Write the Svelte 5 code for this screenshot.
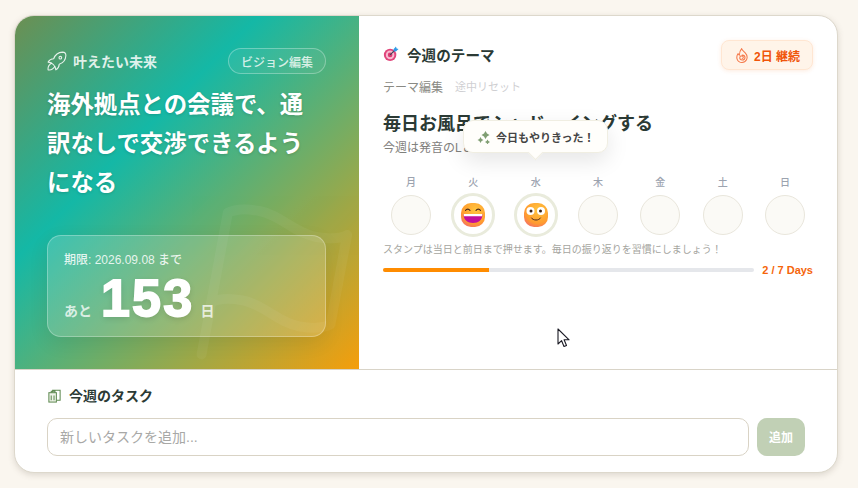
<script>
  const days = [
    { label: '月', stamp: null },
    { label: '火', stamp: 'grin' },
    { label: '水', stamp: 'smile' },
    { label: '木', stamp: null },
    { label: '金', stamp: null },
    { label: '土', stamp: null },
    { label: '日', stamp: null }
  ];
  const done = days.filter((d) => d.stamp).length;
  const progress = (done / days.length) * 100;
</script>

<div class="page">
  <main class="card">
    <div class="top">
      <section class="vision">
        <svg class="ghost" viewBox="0 0 24 24" fill="none" stroke="#fff" stroke-width="1.3" stroke-linecap="round" stroke-linejoin="round">
          <path d="M4 15s1-1 4-1 5 2 8 2 4-1 4-1V3s-1 1-4 1-5-2-8-2-4 1-4 1z" />
          <path d="M4 22v-7" />
        </svg>
        <div class="vision-head">
          <h2 class="vision-title">
            <svg class="rocket" viewBox="3 3 18 18" fill="none" stroke="currentColor" stroke-width="1" stroke-linecap="round" stroke-linejoin="round">
              <path d="M4 13a8 8 0 0 1 7 7a6 6 0 0 0 3 -5a9 9 0 0 0 6 -8a3 3 0 0 0 -3 -3a9 9 0 0 0 -8 6a6 6 0 0 0 -5 3" />
              <path d="M7 14a6 6 0 0 0 -3 6a6 6 0 0 0 6 -3" />
              <circle cx="15" cy="9" r="1.200" />
            </svg>
            叶えたい未来
          </h2>
          <button class="pill">ビジョン編集</button>
        </div>
        <p class="goal">海外拠点との会議で、通訳なしで交渉できるようになる</p>
        <div class="deadline">
          <div class="deadline-date">期限: 2026.09.08 まで</div>
          <div class="count">
            <span class="count-unit">あと</span>
            <span class="count-num">153</span>
            <span class="count-unit">日</span>
          </div>
        </div>
      </section>

      <section class="theme">
        <div class="theme-head">
          <h2 class="theme-title">
            <svg class="dart" viewBox="0 0 18 18">
              <circle cx="8" cy="10" r="7" fill="#e0457b" />
              <circle cx="8" cy="10" r="4.800" fill="#f8b8cf" />
              <circle cx="8" cy="10" r="2.600" fill="#d93a72" />
              <path d="M8 10 14 4" stroke="#3a4652" stroke-width="1.200" />
              <path d="M11.800 3.600 14.600.6l.7 2.100 2.200.6-3 3-2.500-.4z" fill="#2f9be6" />
            </svg>
            今週のテーマ
          </h2>
          <div class="streak">
            <svg class="flame" viewBox="4 2 16 20" fill="none" stroke="currentColor" stroke-width="1.400" stroke-linecap="round" stroke-linejoin="round">
              <path d="M11.500 2.800c.8 2.700 3 3.800 4.800 5.800 2.400 2.600 3.200 6 1.700 9-1.400 2.700-3.600 3.700-6 3.700-3 0-5.400-1.500-6.400-4.200-1-2.700-.3-5.600 1.200-7.600.4 1 .9 1.700 1.700 2.200.2-3.500 1-6.700 3-8.900z" />
              <path d="M12.200 11.200c2.200 0 3.800 1.500 3.800 3.400s-1.700 3.400-3.700 3.400-3.300-1.300-3.300-2.900 1.200-2.600 2.600-2.600 2.200.9 2.200 1.900-.7 1.500-1.500 1.500" />
            </svg>
            2日 継続
          </div>
        </div>
        <div class="theme-links">
          <button class="link">テーマ編集</button>
          <button class="link muted">途中リセット</button>
        </div>
        <h3 class="theme-name">毎日お風呂でシャドーイングする</h3>
        <p class="theme-sub">今週は発音のLとRを意識する</p>

        <div class="toast">
          <svg class="sparkle" viewBox="0 0 14 14" fill="#7f9e72">
            <path d="M8.500 1 10 3.500 12.500 5 10 6.500 8.500 9 7 6.500 4.500 5 7 3.500z" />
            <path d="M3.500 7 4.600 8.900 6.500 10 4.600 11.100 3.500 13 2.400 11.100.5 10 2.400 8.900z" />
            <path d="M10.500 9.500l.9 1.600 1.600.9-1.600.9-.9 1.600-.9-1.600-1.600-.9 1.600-.9z" />
          </svg>
          今日もやりきった！
        </div>

        <div class="week">
          {#each days as day}
            <div class="day">
              <span class="day-label">{day.label}</span>
              <div class="stamp" class:on={day.stamp}>
                {#if day.stamp}
                  <svg class="emoji" viewBox="0 0 26 26">
                    <defs>
                      <radialGradient id="face-{day.stamp}" cx="0.6" cy="0.3" r="0.85">
                        <stop offset="0" stop-color="#ffc53f" />
                        <stop offset="0.65" stop-color="#ff9c2f" />
                        <stop offset="1" stop-color="#f0607a" />
                      </radialGradient>
                    </defs>
                    <rect x="1" y="1" width="24" height="24" rx="10" fill="url(#face-{day.stamp})" />
                    {#if day.stamp === 'grin'}
                      <path d="M5.500 8.500c1-1.800 3.500-1.800 4.500 0M16 8.500c1-1.800 3.500-1.800 4.500 0" fill="none" stroke="#4a2a1c" stroke-width="1.100" stroke-linecap="round" />
                      <path d="M3.500 12h19c0 6-4 9-9.500 9S3.500 18 3.500 12z" fill="#c2109c" />
                      <path d="M3.700 12h18.600c0 .8-.1 1.500-.3 2.200H4c-.2-.7-.3-1.400-.3-2.200z" fill="#fff" />
                    {:else}
                      <circle cx="7.500" cy="9" r="4" fill="#fff" />
                      <circle cx="18" cy="9" r="4" fill="#fff" />
                      <circle cx="8" cy="9" r="1.500" fill="#3a2418" />
                      <circle cx="17.500" cy="9" r="1.500" fill="#3a2418" />
                      <path d="M8.500 16c1.500 2.800 7.500 2.800 9 0" fill="none" stroke="#4a2a1c" stroke-width="1" stroke-linecap="round" />
                    {/if}
                  </svg>
                {/if}
              </div>
            </div>
          {/each}
        </div>

        <p class="note">スタンプは当日と前日まで押せます。毎日の振り返りを習慣にしましょう！</p>
        <div class="progress">
          <div class="track"><div class="fill" style="width: {progress}%"></div></div>
          <span class="progress-label">{done} / {days.length} Days</span>
        </div>
      </section>
    </div>

    <section class="tasks">
      <h2 class="tasks-title">
        <svg class="clip" viewBox="0 0 16 16" fill="none" stroke="#5f8a52" stroke-width="1.100">
          <rect x="2" y="5" width="8" height="10" fill="#eef3e8" />
          <path d="M6 4.500V2.500h8v10.500h-3.500M4.500 5V3.500h4V5M4.500 8v5M7.500 8v5" />
        </svg>
        今週のタスク
      </h2>
      <div class="task-form">
        <input class="task-input" type="text" placeholder="新しいタスクを追加..." />
        <button class="add">追加</button>
      </div>
    </section>
  </main>

  <svg class="cursor" viewBox="0 0 14 20" width="14" height="20">
    <path d="M1 1v15l3.600-3.300 2.400 5.800 2.500-1-2.400-5.700h5z" fill="#fff" stroke="#1a1a24" stroke-width="1.100" stroke-linejoin="round" />
  </svg>
</div>

<style>
  :global(body) {
    margin: 0;
    background: #faf6ef;
  }
  .page {
    position: relative;
    box-sizing: border-box;
    width: 858px;
    height: 488px;
    padding: 15px 20px 15px 14px;
    font-family: "Liberation Sans", "Noto Sans CJK JP", sans-serif;
    color: #2b3a35;
  }
  .card {
    box-sizing: border-box;
    width: 824px;
    height: 458px;
    display: flex;
    flex-direction: column;
    background: #fff;
    border: 1px solid #ddd8cc;
    border-radius: 20px;
    box-shadow: 0 2px 6px rgba(90, 80, 60, 0.18);
    overflow: hidden;
  }
  h2, h3, p { margin: 0; }
  button { font-family: inherit; cursor: pointer; }
  .top {
    display: grid;
    grid-template-columns: 344px 1fr;
    height: 353px;
    border-bottom: 1px solid #d9d4c8;
  }
  .vision {
    position: relative;
    overflow: hidden;
    box-sizing: border-box;
    padding: 32px 33px 32px 32px;
    color: #fff;
    background: linear-gradient(135deg, #6c8f52 0%, #14b8a6 35%, #f59e0b 100%);
  }
  .ghost {
    position: absolute;
    left: 169px;
    top: 184px;
    width: 182px;
    height: 182px;
    opacity: 0.045;
    transform: rotate(10.5deg);
  }
  .vision-head {
    position: relative;
    display: flex;
    align-items: center;
    justify-content: space-between;
    height: 26px;
  }
  .vision-title {
    display: flex;
    align-items: center;
    gap: 6px;
    padding-bottom: 1px;
    font-size: 14px;
    font-weight: 700;
    color: rgba(255, 255, 255, 0.85);
  }
  .rocket { width: 20px; height: 20px; }
  .pill {
    height: 26px;
    width: 98px;
    padding: 0;
    font-size: 12px;
    font-weight: 500;
    color: rgba(255, 255, 255, 0.8);
    background: rgba(255, 255, 255, 0.06);
    border: 1px solid rgba(255, 255, 255, 0.3);
    border-radius: 13px;
  }
  .goal {
    position: relative;
    margin-top: 12px;
    font-size: 23.4px;
    font-weight: 700;
    line-height: 39px;
    text-shadow: 0 1px 3px rgba(0, 0, 0, 0.15);
  }
  .deadline {
    position: relative;
    box-sizing: border-box;
    margin-top: 32px;
    width: 279px;
    height: 102px;
    padding: 15px 16px;
    background: rgba(255, 255, 255, 0.16);
    border: 1px solid rgba(255, 255, 255, 0.28);
    border-radius: 14px;
    box-shadow: 0 6px 20px rgba(0, 0, 0, 0.08);
  }
  .deadline-date {
    font-size: 12px;
    line-height: 18px;
    font-weight: 500;
    color: rgba(255, 255, 255, 0.85);
  }
  .count {
    display: flex;
    align-items: baseline;
    gap: 9px;
    margin-top: 5px;
    line-height: 48px;
  }
  .count-unit {
    font-size: 14px;
    font-weight: 700;
    color: rgba(255, 255, 255, 0.75);
  }
  .count-num {
    margin-right: -3px;
    font-size: 52px;
    font-weight: 700;
    letter-spacing: 2.2px;
    -webkit-text-stroke: 1.8px #fff;
    text-shadow: 0 2px 6px rgba(0, 0, 0, 0.15);
  }
  .theme {
    position: relative;
    box-sizing: border-box;
    padding: 24px;
  }
  .theme-head {
    display: flex;
    align-items: center;
    justify-content: space-between;
    height: 30px;
  }
  .theme-title {
    display: flex;
    align-items: center;
    gap: 8px;
    padding-bottom: 2px;
    font-size: 14.6px;
    font-weight: 700;
    color: #2b3a35;
  }
  .dart { width: 16px; height: 16px; }
  .streak {
    box-sizing: border-box;
    display: flex;
    align-items: center;
    gap: 6px;
    width: 92px;
    height: 30px;
    padding-left: 14px;
    font-size: 12px;
    font-weight: 700;
    color: #f0550a;
    background: #fff4e9;
    border: 1px solid #ffe6d2;
    border-radius: 8px;
    box-shadow: 0 1px 4px rgba(240, 120, 40, 0.15);
  }
  .flame { width: 12px; height: 15px; color: #f5794a; }
  .theme-links {
    display: flex;
    gap: 12px;
    align-items: center;
    margin-top: 7px;
    height: 18px;
  }
  .link {
    padding: 0;
    border: 0;
    background: none;
    font-size: 12px;
    color: #8a8a84;
  }
  .link.muted { font-size: 11px; color: #cfcfd2; }
  .theme-name {
    margin-top: 16px;
    font-size: 18px;
    font-weight: 700;
    line-height: 26px;
    color: #2b3a35;
  }
  .theme-sub {
    margin-top: 2px;
    font-size: 12px;
    line-height: 18px;
    color: #7f807c;
  }
  .toast {
    position: absolute;
    left: 104px;
    top: 104px;
    box-sizing: border-box;
    width: 145px;
    height: 33px;
    display: flex;
    align-items: center;
    gap: 5px;
    padding-left: 13px;
    font-size: 11px;
    font-weight: 700;
    color: #444;
    background: #fffefb;
    border: 1px solid #f0eee2;
    border-radius: 10px;
    box-shadow: 0 8px 22px rgba(0, 0, 0, 0.1);
  }
  .toast::after {
    content: "";
    position: absolute;
    left: 66px;
    bottom: -6px;
    width: 10px;
    height: 10px;
    background: #fffefb;
    transform: rotate(45deg);
    border-right: 1px solid #f0eee2;
    border-bottom: 1px solid #f0eee2;
  }
  .sparkle { width: 14px; height: 14px; }
  .week {
    display: flex;
    justify-content: space-between;
    margin-top: 18px;
  }
  .day {
    width: 56px;
    display: flex;
    flex-direction: column;
    align-items: center;
  }
  .day-label {
    height: 16px;
    line-height: 16px;
    font-size: 10px;
    font-weight: 500;
    color: #9ca3af;
  }
  .stamp {
    box-sizing: border-box;
    width: 40px;
    height: 40px;
    margin: 4px 0 2px;
    display: flex;
    align-items: center;
    justify-content: center;
    background: #fbfaf6;
    border: 1px solid #e9e6dc;
    border-radius: 50%;
  }
  .stamp.on {
    width: 44px;
    height: 44px;
    margin: 2px 0 0;
    background: #fff;
    border: 3px solid #e9ebdc;
  }
  .emoji { width: 26px; height: 26px; }
  .note {
    margin-top: 6px;
    font-size: 10px;
    line-height: 14px;
    color: #a5a5a0;
  }
  .progress {
    display: flex;
    align-items: center;
    gap: 8px;
    margin-top: 6px;
    height: 14px;
  }
  .track {
    flex: 1;
    height: 4px;
    background: #e5e7eb;
    border-radius: 2px;
    overflow: hidden;
  }
  .fill { height: 100%; background: #ff8c00; }
  .progress-label {
    font-size: 11px;
    font-weight: 700;
    color: #f5650a;
  }
  .tasks {
    flex: 1;
    box-sizing: border-box;
    padding: 16px 32px;
  }
  .tasks-title {
    display: flex;
    align-items: center;
    gap: 7px;
    height: 20px;
    padding-bottom: 2px;
    box-sizing: border-box;
    font-size: 14px;
    font-weight: 700;
    color: #2b3a35;
  }
  .clip { width: 15px; height: 15px; }
  .task-form {
    display: flex;
    gap: 8px;
    margin-top: 12px;
  }
  .task-input {
    box-sizing: border-box;
    flex: 1;
    height: 38px;
    padding: 0 12px;
    font-family: inherit;
    font-size: 14px;
    border: 1px solid #d9d3c5;
    border-radius: 10px;
    outline: none;
  }
  .task-input::placeholder { color: #a8a8a6; }
  .add {
    width: 48px;
    height: 38px;
    padding: 0 0 2px;
    font-size: 12px;
    font-weight: 700;
    color: #fff;
    background: #c1d0b5;
    border: 0;
    border-radius: 10px;
  }
  .cursor {
    position: absolute;
    left: 557px;
    top: 328px;
  }
</style>
